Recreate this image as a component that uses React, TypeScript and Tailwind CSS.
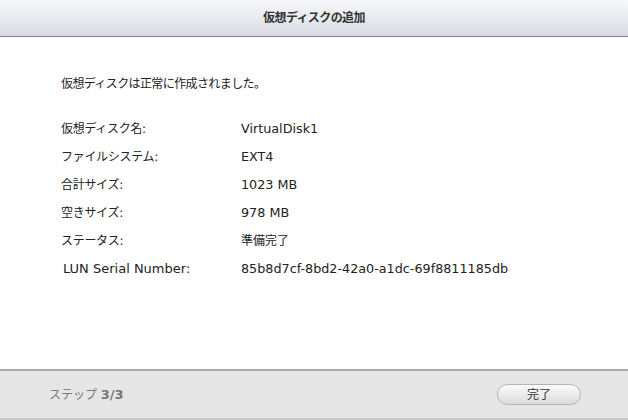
import React from "react";

const rows: [string, string, boolean, boolean][] = [
  ["仮想ディスク名:", "VirtualDisk1", false, true],
  ["ファイルシステム:", "EXT4", false, true],
  ["合計サイズ:", "1023 MB", false, true],
  ["空きサイズ:", "978 MB", false, true],
  ["ステータス:", "準備完了", false, false],
  ["LUN Serial Number:", "85b8d7cf-8bd2-42a0-a1dc-69f8811185db", true, true],
];

export default function App() {
  return (
    <div
      className="w-[628px] h-[420px] flex flex-col bg-white text-[#222] overflow-hidden"
      style={{ fontFamily: '"DejaVu Sans", "Noto Sans CJK JP", sans-serif' }}
    >
      <div className="h-[37px] shrink-0 flex items-center justify-center bg-gradient-to-b from-[#f7f8fa] to-[#d8dce2] border-b border-[#7d8186]">
        <span className="text-[12px] font-bold text-[#333] leading-none tracking-[-0.6px]">仮想ディスクの追加</span>
      </div>
      <div className="flex-1 flex flex-col pl-[61px] pt-[38px]">
        <div className="text-[12px] leading-[18px] tracking-[-0.6px]">仮想ディスクは正常に作成されました。</div>
        <div className="mt-[22px] flex flex-col">
          {rows.map(([k, v, kLatin, vLatin]) => (
            <div key={k} className="flex h-[28px] items-center">
              <span className={kLatin ? "w-[180px] shrink-0 text-[13px] pl-[2px]" : "w-[180px] shrink-0 text-[12px] tracking-[-0.3px]"}>{k}</span>
              <span className={vLatin ? "text-[12.75px]" : "text-[12px]"}>{v}</span>
            </div>
          ))}
        </div>
      </div>
      <div className="h-[51px] shrink-0 flex items-center justify-between bg-[#e6e6e6] border-t-2 border-[#a9a9a9] border-b-2 border-b-[#c8c8c8] pl-[49px] pr-[47px]">
        <span className="text-[12px] text-[#777]">
          ステップ <span className="font-bold text-[13px]">3/3</span>
        </span>
        <button className="w-[84px] h-[21px] rounded-full border border-[#b5b5b5] bg-gradient-to-b from-[#fbfbfb] to-[#dcdcdc] text-[12px] leading-none text-[#333]">
          完了
        </button>
      </div>
    </div>
  );
}
